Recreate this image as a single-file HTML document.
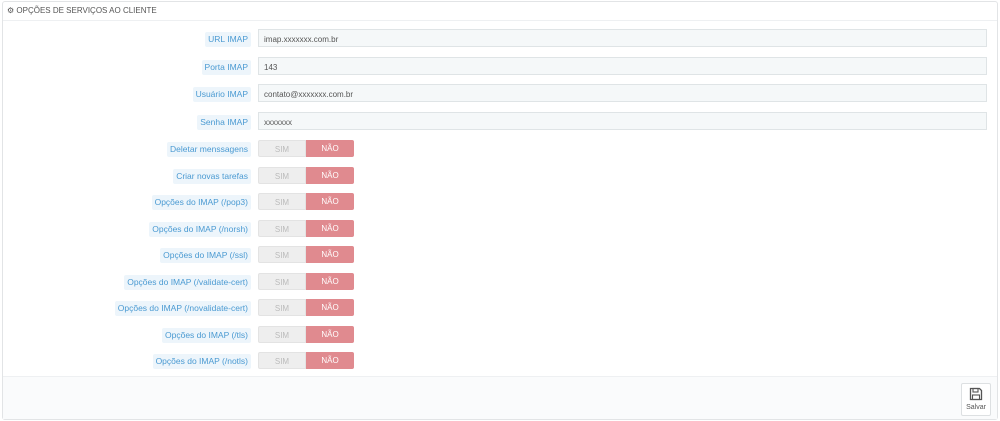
<!DOCTYPE html>
<html><head><meta charset="utf-8"><style>
body{margin:0;background:#fff;font-family:"Liberation Sans",sans-serif;width:1000px;height:421px;overflow:hidden;position:relative}
.panel{position:absolute;left:2px;top:1px;width:994px;height:417px;border:1px solid #e2e4e6;border-radius:3px;background:#fff}
.hd{position:absolute;left:0;top:0;right:0;height:18px;border-bottom:1px solid #eef0f2;font-size:8px;color:#555;line-height:18px;padding-left:4px}
.lbl{position:absolute;right:749px;font-size:8.5px;color:#4a9ad2;background:#edf5fb;padding:2px 3px;line-height:11px;border-radius:2px;white-space:nowrap}
.inp{position:absolute;left:258px;width:729px;height:18px;background:#f5f8f9;border:1px solid #dfe4e6;box-sizing:border-box;font-size:8px;color:#555;line-height:17px;padding-left:5px;padding-top:1px}
.tg{position:absolute;left:258px;width:96px;height:17px;font-size:8px;line-height:17px;text-align:center}
.tg .s{position:absolute;left:0;width:48px;height:17px;background:#eeeeee;color:#bbb;border:1px solid #e3e3e3;box-sizing:border-box;border-radius:2px 0 0 2px}
.tg .n{position:absolute;left:48px;width:48px;height:17px;background:#e08a8f;color:#fff;border-radius:0 2px 2px 0}
.btn{position:absolute;right:6px;top:6px;width:30px;height:33px;background:#fff;border:1px solid #dde0e2;border-radius:2px;box-sizing:border-box;font-size:7px;color:#555;text-align:center}
</style></head><body>
<div class="panel">
<div class="hd"><span style="font-size:8px">⚙</span> OPÇÕES DE SERVIÇOS AO CLIENTE</div>
</div>
<div class="lbl" style="top:32px">URL IMAP</div><div class="inp" style="top:29px">imap.xxxxxxx.com.br</div>
<div class="lbl" style="top:60px">Porta IMAP</div><div class="inp" style="top:57px">143</div>
<div class="lbl" style="top:87px">Usuário IMAP</div><div class="inp" style="top:84px">contato@xxxxxxx.com.br</div>
<div class="lbl" style="top:115px">Senha IMAP</div><div class="inp" style="top:112px">xxxxxxx</div>

<div class="lbl" style="top:142px">Deletar menssagens</div><div class="tg" style="top:140px"><div class="s">SIM</div><div class="n">NÃO</div></div>
<div class="lbl" style="top:169px">Criar novas tarefas</div><div class="tg" style="top:167px"><div class="s">SIM</div><div class="n">NÃO</div></div>
<div class="lbl" style="top:195px">Opções do IMAP (/pop3)</div><div class="tg" style="top:193px"><div class="s">SIM</div><div class="n">NÃO</div></div>
<div class="lbl" style="top:222px">Opções do IMAP (/norsh)</div><div class="tg" style="top:220px"><div class="s">SIM</div><div class="n">NÃO</div></div>
<div class="lbl" style="top:248px">Opções do IMAP (/ssl)</div><div class="tg" style="top:246px"><div class="s">SIM</div><div class="n">NÃO</div></div>
<div class="lbl" style="top:275px">Opções do IMAP (/validate-cert)</div><div class="tg" style="top:273px"><div class="s">SIM</div><div class="n">NÃO</div></div>
<div class="lbl" style="top:301px">Opções do IMAP (/novalidate-cert)</div><div class="tg" style="top:299px"><div class="s">SIM</div><div class="n">NÃO</div></div>
<div class="lbl" style="top:328px">Opções do IMAP (/tls)</div><div class="tg" style="top:326px"><div class="s">SIM</div><div class="n">NÃO</div></div>
<div class="lbl" style="top:354px">Opções do IMAP (/notls)</div><div class="tg" style="top:352px"><div class="s">SIM</div><div class="n">NÃO</div></div>

<div style="position:absolute;left:3px;top:376px;width:994px;height:42px;background:#fafbfc;border-top:1px solid #eef0f2">
<div class="btn" style="top:6px;right:6px">
<svg width="14" height="14" viewBox="0 0 14 14" style="margin-top:3px"><path d="M1.5 1.5h9l2 2v9h-11z" fill="none" stroke="#555" stroke-width="1.3"/><rect x="4" y="1.5" width="5" height="3.5" fill="none" stroke="#555" stroke-width="1.1"/><rect x="3.5" y="8" width="7" height="4.5" fill="none" stroke="#555" stroke-width="1.1"/></svg>
<div style="line-height:9px">Salvar</div></div>
</div>
</body></html>
